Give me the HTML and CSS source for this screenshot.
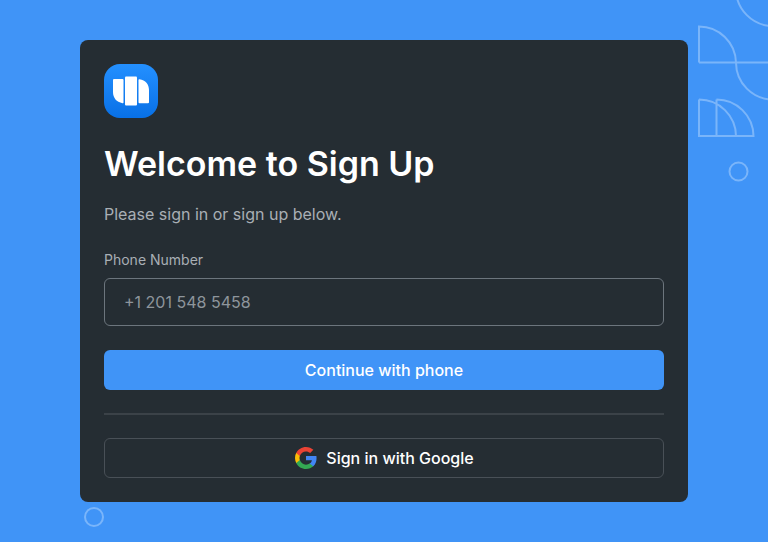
FILE: index.html
```html
<!DOCTYPE html>
<html lang="en">
<head>
  <meta charset="utf-8">
  <meta name="viewport" content="width=device-width, initial-scale=1">
  <title>Sign Up</title>
  <link rel="stylesheet" href="styles.css">
</head>
<body>
  <svg class="pattern" width="70" height="184" viewBox="698 0 70 184" aria-hidden="true">
    <circle cx="773" cy="-11" r="37"/>
    <path d="M699 62.5V26.5A37 37 0 0 1 736 62.5A37 37 0 0 0 773 99.500M699 62.500H768"/>
    <path d="M699 99.500V136H736A37 37 0 0 0 699 99.500M716.500 99.500V136H753.500A37 37 0 0 0 716.500 99.500"/>
    <circle cx="738.500" cy="171.500" r="9"/>
  </svg>
  <svg class="ring" width="20" height="20" viewBox="0 0 20 20" aria-hidden="true">
    <circle cx="10" cy="10" r="9"/>
  </svg>
  <main class="card">
    <svg class="logo" width="54" height="54" viewBox="0 0 54 54" aria-hidden="true">
      <defs>
        <linearGradient id="tile" x1="0" y1="0" x2="0" y2="1">
          <stop offset="0" stop-color="#2490ff"/>
          <stop offset="1" stop-color="#0870e6"/>
        </linearGradient>
      </defs>
      <rect fill="url(#tile)" width="54" height="54" rx="16"/>
      <g fill="#fff">
        <path d="M10 15H18.500Q19.500 15 19.500 16V38.500Q19.500 39.500 18.500 39.200C12.500 38 9 34 9 28V16Q9 15 10 15Z"/>
        <rect x="21" y="12.500" width="12" height="29" rx="1"/>
        <path d="M44 39.200H35.500Q34.500 39.200 34.500 38.200V16Q34.500 15 35.500 15.200C41.500 16 45 20 45 26V38.200Q45 39.200 44 39.200Z"/>
      </g>
    </svg>
    <h1 class="title">Welcome to Sign Up</h1>
    <p class="intro">Please sign in or sign up below.</p>
    <form class="form">
      <label class="label" for="phone">Phone Number</label>
      <input class="field" id="phone" type="tel" placeholder="+1 201 548 5458">
      <button class="button primary" type="submit">Continue with phone</button>
    </form>
    <hr class="divider">
    <button class="button outline" type="button">
      <svg width="24" height="24" viewBox="0 0 24 24" aria-hidden="true">
        <path fill="#4285f4" d="M22.560 12.250c0-.78-.07-1.530-.2-2.250H12v4.260h5.920c-.26 1.370-1.040 2.530-2.210 3.310v2.770h3.570c2.080-1.920 3.280-4.740 3.280-8.090z"/>
        <path fill="#34a853" d="M12 23c2.970 0 5.460-.98 7.280-2.660l-3.570-2.770c-.98.66-2.230 1.060-3.710 1.060-2.860 0-5.290-1.930-6.160-4.530H2.180v2.840C3.990 20.530 7.700 23 12 23z"/>
        <path fill="#fbbc05" d="M5.840 14.100c-.22-.66-.35-1.360-.35-2.100s.13-1.440.35-2.100V7.060H2.180C1.430 8.550 1 10.220 1 12s.43 3.450 1.180 4.940l3.660-2.840z"/>
        <path fill="#ea4335" d="M12 5.380c1.620 0 3.060.56 4.210 1.640l3.150-3.150C17.450 2.090 14.970 1 12 1 7.700 1 3.990 3.470 2.180 7.060l3.660 2.840c.87-2.600 3.300-4.520 6.160-4.520z"/>
      </svg>
      Sign in with Google
    </button>
  </main>
</body>
</html>
```

FILE: styles.css
```css
* {
  box-sizing: border-box;
}

body {
  position: relative;
  min-height: 100vh;
  margin: 0;
  padding: 40px 80px;
  overflow: hidden;
  background: #4094f7;
  color: #fff;
  font-family: Inter, "Liberation Sans", sans-serif;
  font-size: 16px;
  line-height: 24px;
}

.pattern,
.ring {
  position: absolute;
  fill: none;
  stroke: #7ab5fa;
  stroke-width: 2;
}

.pattern {
  top: 0;
  right: 0;
}

.ring {
  left: 84px;
  bottom: 15px;
}

.card {
  display: flex;
  flex-direction: column;
  padding: 24px;
  border-radius: 8px;
  background: #252d33;
}

.logo {
  display: block;
}

.title {
  margin: 24px 0 0;
  font-size: 34px;
  font-weight: 600;
  line-height: 44px;
}

.intro {
  margin: 16px 0 0;
  color: #a9afb5;
}

.form {
  display: flex;
  flex-direction: column;
  margin-top: 24px;
}

.label {
  color: #a9afb5;
  font-size: 14px;
  line-height: 20px;
}

.field {
  height: 48px;
  margin: 8px 0 24px;
  padding: 0 19px;
  border: 1px solid #6c757d;
  border-radius: 6px;
  background: transparent;
  color: #fff;
  font: inherit;
}

.field::placeholder {
  color: #8e959c;
  opacity: 1;
}

.button {
  display: flex;
  align-items: center;
  justify-content: center;
  gap: 8px;
  height: 40px;
  padding: 0 16px;
  border: 0;
  border-radius: 6px;
  color: #fff;
  font: inherit;
  font-weight: 500;
}

.primary {
  background: #4094f7;
}

.outline {
  border: 1px solid #495057;
  background: transparent;
}

.divider {
  width: 100%;
  height: 2px;
  margin: 23px 0;
  border: 0;
  background: #3b4248;
}
```
